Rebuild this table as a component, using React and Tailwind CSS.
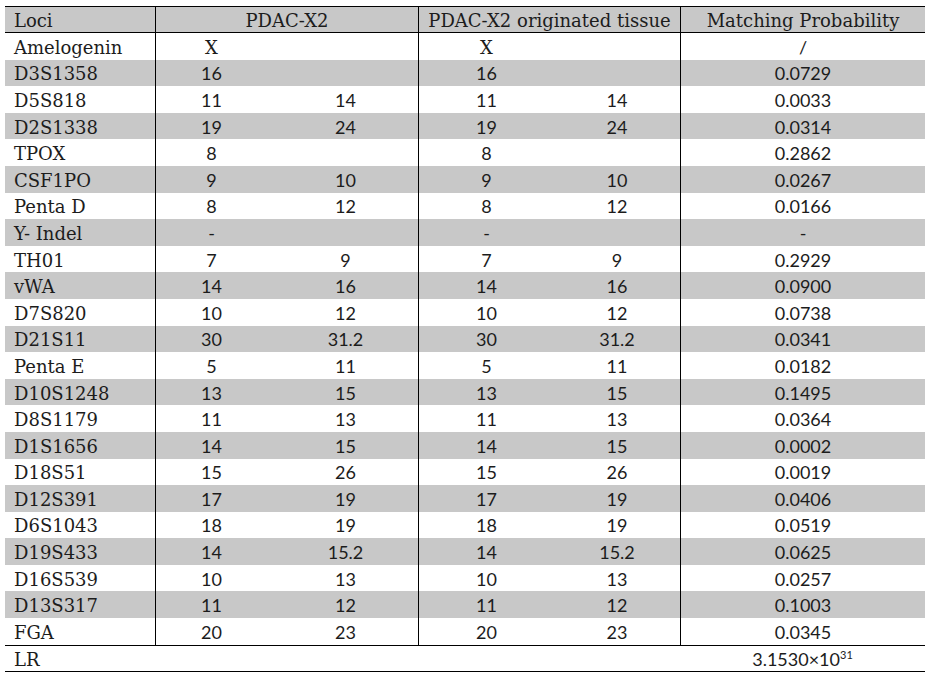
import React from "react";

const rows = [
  ["Amelogenin", "X", "", "X", "", "/"],
  ["D3S1358", "16", "", "16", "", "0.0729"],
  ["D5S818", "11", "14", "11", "14", "0.0033"],
  ["D2S1338", "19", "24", "19", "24", "0.0314"],
  ["TPOX", "8", "", "8", "", "0.2862"],
  ["CSF1PO", "9", "10", "9", "10", "0.0267"],
  ["Penta D", "8", "12", "8", "12", "0.0166"],
  ["Y- Indel", "-", "", "-", "", "-"],
  ["TH01", "7", "9", "7", "9", "0.2929"],
  ["vWA", "14", "16", "14", "16", "0.0900"],
  ["D7S820", "10", "12", "10", "12", "0.0738"],
  ["D21S11", "30", "31.2", "30", "31.2", "0.0341"],
  ["Penta E", "5", "11", "5", "11", "0.0182"],
  ["D10S1248", "13", "15", "13", "15", "0.1495"],
  ["D8S1179", "11", "13", "11", "13", "0.0364"],
  ["D1S1656", "14", "15", "14", "15", "0.0002"],
  ["D18S51", "15", "26", "15", "26", "0.0019"],
  ["D12S391", "17", "19", "17", "19", "0.0406"],
  ["D6S1043", "18", "19", "18", "19", "0.0519"],
  ["D19S433", "14", "15.2", "14", "15.2", "0.0625"],
  ["D16S539", "10", "13", "10", "13", "0.0257"],
  ["D13S317", "11", "12", "11", "12", "0.1003"],
  ["FGA", "20", "23", "20", "23", "0.0345"],
];

const serif = "font-['DejaVu_Serif',serif] text-[18px]";
const sans = "font-['Lato',sans-serif] text-[18px]";

// letters (X) use the serif face, digits and symbols the sans one
const Val = ({ v }) => (
  <span className={v === "X" ? serif : sans}>{v}</span>
);

const App = () => {
  return (
    <div className="w-[943px] h-[680px] bg-white text-[#1c1c1c] pt-[6px] pl-[5px]">
      <div className="w-[920px]">
        {/* header */}
        <div className={`flex h-[27px] items-stretch bg-[#c8c8c8] border-t border-b border-black ${serif}`}>
          <div className="w-[150px] pl-[9px] pt-[1px] flex items-center">Loci</div>
          <div className="w-[263px] pt-[1px] flex items-center justify-center border-l border-black">PDAC-X2</div>
          <div className="w-[262px] pt-[1px] flex items-center justify-center border-l border-black">PDAC-X2 originated tissue</div>
          <div className="w-[245px] pt-[1px] flex items-center justify-center border-l border-black">Matching Probability</div>
        </div>

        {rows.map((r, i) => (
          <div
            key={r[0]}
            className={`flex h-[26.6px] items-stretch ${i % 2 === 1 ? "bg-[#c8c8c8]" : "bg-white"}`}
          >
            <div className={`w-[150px] pl-[9px] pt-[2px] flex items-center ${serif}`}>{r[0]}</div>
            <div className="w-[263px] flex pt-[2px] border-l border-black">
              <div className="w-[111px] flex items-center justify-center"><Val v={r[1]} /></div>
              <div className="w-[151px] pl-[6px] flex items-center justify-center"><Val v={r[2]} /></div>
            </div>
            <div className="w-[262px] flex pt-[2px] border-l border-black">
              <div className="w-[135px] flex items-center justify-center"><Val v={r[3]} /></div>
              <div className="w-[126px] flex items-center justify-center"><Val v={r[4]} /></div>
            </div>
            <div className="w-[245px] flex pt-[2px] items-center justify-center border-l border-black">
              <Val v={r[5]} />
            </div>
          </div>
        ))}

        {/* likelihood ratio */}
        <div className="flex h-[27px] pt-[2px] items-center border-t border-b border-black">
          <div className={`w-[675px] pl-[9px] ${serif}`}>LR</div>
          <div className={`w-[245px] text-center ${sans}`}>
            3.1530×10<sup className="text-[11px] -top-[7px]">31</sup>
          </div>
        </div>
      </div>
    </div>
  );
};

export default App;
